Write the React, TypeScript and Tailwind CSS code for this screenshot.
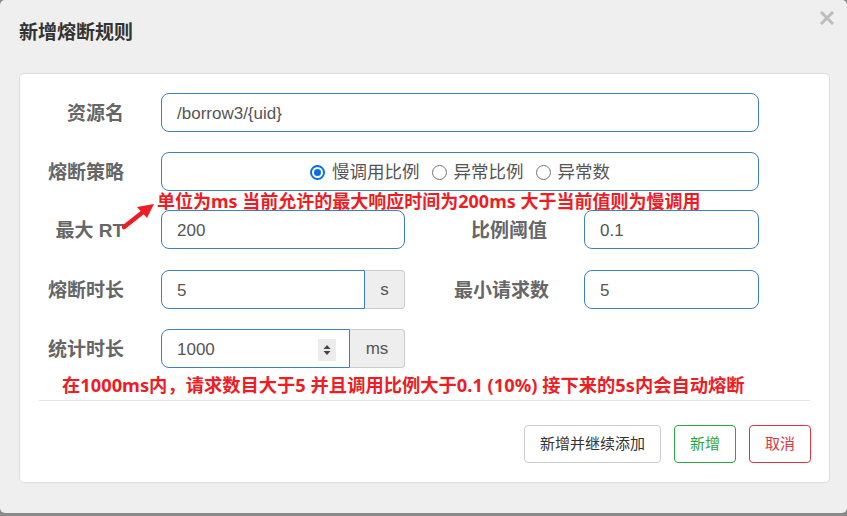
import React from "react";

const font = "font-['Liberation_Sans','Noto_Sans_CJK_SC',sans-serif]";
const red = "font-['Noto_Sans','Noto_Sans_CJK_SC',sans-serif] font-bold text-[#ee1c25] leading-none whitespace-nowrap";

function Label({ children, w = "w-[104px]" }: { children: React.ReactNode; w?: string }) {
  return (
    <div className={`${w} shrink-0 pt-[4px] text-right text-[19px] font-bold text-[#666]`}>{children}</div>
  );
}

function Input({ value, w, rounded = "rounded-[8px]" }: { value: string; w: string; rounded?: string }) {
  return (
    <div className={`${w} h-[39px] shrink-0 flex items-center px-[15px] pt-[2px] border border-[#3d7fc0] ${rounded} text-[17px] text-[#555] bg-white`}>
      {value}
    </div>
  );
}

function Addon({ text, w }: { text: string; w: string }) {
  return (
    <div className={`${w} h-[39px] shrink-0 flex items-center justify-center pt-[1px] border border-l-0 border-[#ccc] bg-[#eee] rounded-r-[4px] text-[17px] text-[#555]`}>
      {text}
    </div>
  );
}

function Radio({ checked, label }: { checked?: boolean; label: string }) {
  return (
    <div className="flex items-center gap-[7px]">
      {checked ? (
        <span className="w-[15px] h-[15px] rounded-full border-2 border-[#0b6fe0] flex items-center justify-center">
          <span className="w-[7px] h-[7px] rounded-full bg-[#0b6fe0]" />
        </span>
      ) : (
        <span className="w-[15px] h-[15px] rounded-full border-[1.5px] border-[#767676] bg-white" />
      )}
      <span className="text-[17.5px] text-[#555]">{label}</span>
    </div>
  );
}

export default function App() {
  return (
    <div className={`${font} w-[847px] h-[516px] bg-[#8a8a8a] overflow-hidden`}>
      <div className="relative h-[513px] bg-[#efefef] rounded-[5px] pl-[19px] pr-[17px]">
        <div className="h-[73px] flex items-center pb-[6px]">
          <h1 className="text-[19px] font-bold text-[#333]">新增熔断规则</h1>
        </div>
        <svg className="absolute right-[13px] top-[11px]" width="14" height="14" viewBox="0 0 14 14">
          <path d="M2 2 L12 12 M12 2 L2 12" stroke="#bdbdbd" strokeWidth="3" strokeLinecap="square" />
        </svg>

        <div className="relative h-[410px] bg-white border border-[#ddd] rounded-[5px] pt-[19px]">
          <div className="flex items-center gap-[37px]">
            <Label>资源名</Label>
            <Input value="/borrow3/{uid}" w="w-[598px]" />
          </div>

          <div className="flex items-center gap-[37px] mt-[20px]">
            <Label>熔断策略</Label>
            <div className="w-[598px] h-[39px] border border-[#3d7fc0] rounded-[8px] flex items-center justify-center gap-[12px] pt-[2px]">
              <Radio checked label="慢调用比例" />
              <Radio label="异常比例" />
              <Radio label="异常数" />
            </div>
          </div>

          <div className="flex items-center mt-[19px]">
            <Label>最大 RT</Label>
            <div className="ml-[37px]">
              <Input value="200" w="w-[244px]" />
            </div>
            <Label w="w-[142px]">比例阈值</Label>
            <div className="ml-[37px]">
              <Input value="0.1" w="w-[175px]" />
            </div>
          </div>

          <div className="flex items-center mt-[21px]">
            <Label>熔断时长</Label>
            <div className="ml-[37px] flex">
              <Input value="5" w="w-[204px]" rounded="rounded-l-[8px]" />
              <Addon text="s" w="w-[40px]" />
            </div>
            <Label w="w-[144px]">最小请求数</Label>
            <div className="ml-[35px]">
              <Input value="5" w="w-[175px]" />
            </div>
          </div>

          <div className="flex items-center mt-[20px]">
            <Label>统计时长</Label>
            <div className="ml-[37px] flex">
              <div className="w-[189px] h-[39px] flex items-center justify-between pl-[15px] pr-[13px] pt-[2px] border border-[#3d7fc0] rounded-l-[8px] text-[17px] text-[#555]">
                <span>1000</span>
                <span className="w-[18px] h-[22px] bg-[#ececec] flex items-center justify-center">
                  <svg width="8" height="12" viewBox="0 0 8 12">
                    <path d="M4 1 L7.5 5 L0.5 5 Z M4 11 L7.5 7 L0.5 7 Z" fill="#444" />
                  </svg>
                </span>
              </div>
              <Addon text="ms" w="w-[55px]" />
            </div>
          </div>

          <div className={`${red} text-[18.3px] pl-[42px] mt-[8px] h-[20px]`}>
            在1000ms内，请求数目大于5 并且调用比例大于0.1 (10%) 接下来的5s内会自动熔断
          </div>

          <div className="ml-[19px] mr-[19px] mt-[4px] border-t border-[#e5e5e5]" />

          <div className="flex justify-end gap-[13px] pr-[18px] mt-[24px] text-[15px]">
            <button className="h-[38px] w-[137px] border border-[#ccc] rounded-[4px] text-[#333] bg-white">新增并继续添加</button>
            <button className="h-[38px] w-[62px] border border-[#28a745] rounded-[4px] text-[#28a745] bg-white">新增</button>
            <button className="h-[38px] w-[62px] border border-[#dc3545] rounded-[4px] text-[#dc3545] bg-white">取消</button>
          </div>

          <div className={`${red} text-[18px] absolute left-[137px] top-[118px]`}>
            单位为ms 当前允许的最大响应时间为200ms 大于当前值则为慢调用
          </div>
          <svg className="absolute left-[100px] top-[127px]" width="36" height="30" viewBox="0 0 36 30">
            <path d="M4 26 L23 11" stroke="#ee1c25" strokeWidth="4.5" strokeLinecap="round" />
            <path d="M34 3 L17 6 L27 17 Z" fill="#ee1c25" />
          </svg>
        </div>
      </div>
    </div>
  );
}
